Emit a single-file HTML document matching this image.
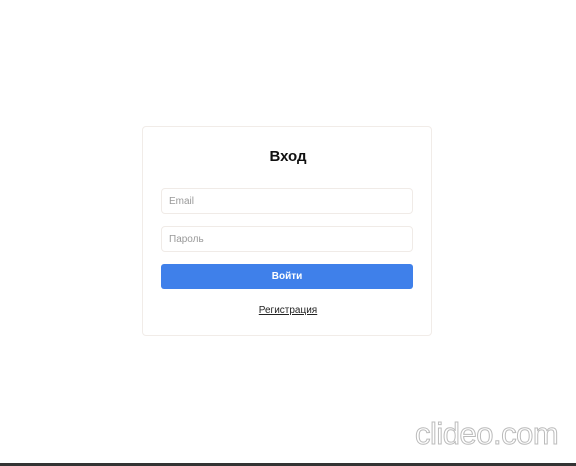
<!DOCTYPE html>
<html><head><meta charset="utf-8"><style>
html,body{margin:0;padding:0;width:576px;height:466px;background:#fff;overflow:hidden;font-family:"Liberation Sans",sans-serif;position:relative}
.card{position:absolute;left:142px;top:126px;width:290px;height:210px;border:1px solid #f1ece8;border-radius:4px;box-sizing:border-box}
h1{position:absolute;left:0;right:0;top:147px;margin:0;text-align:center;font-size:15px;font-weight:bold;color:#111;line-height:20px}
.inp{position:absolute;left:161px;width:252px;height:26px;border:1px solid #f0ebe7;border-radius:4px;box-sizing:border-box;font-size:10px;color:#999;padding-left:7px;line-height:26px}
.btn{position:absolute;left:161px;top:264px;width:252px;height:25px;background:#3f80ea;border-radius:3px;color:#fff;font-size:10px;font-weight:bold;text-align:center;line-height:26px}
.reg{position:absolute;left:0;right:0;top:303px;text-align:center;font-size:10px;color:#222;text-decoration:underline;line-height:16px}
.wm{position:absolute;left:415px;top:416px;font-size:31px;color:transparent;-webkit-text-stroke:1px #bbb;letter-spacing:-0.5px;line-height:36px}
.bar{position:absolute;left:0;bottom:0;width:576px;height:3px;background:#333}
</style></head><body>
<div class="card"></div>
<h1>Вход</h1>
<div class="inp" style="top:188px">Email</div>
<div class="inp" style="top:226px">Пароль</div>
<div class="btn">Войти</div>
<div class="reg">Регистрация</div>
<div class="wm">clideo.com</div>
<div class="bar"></div>
</body></html>
